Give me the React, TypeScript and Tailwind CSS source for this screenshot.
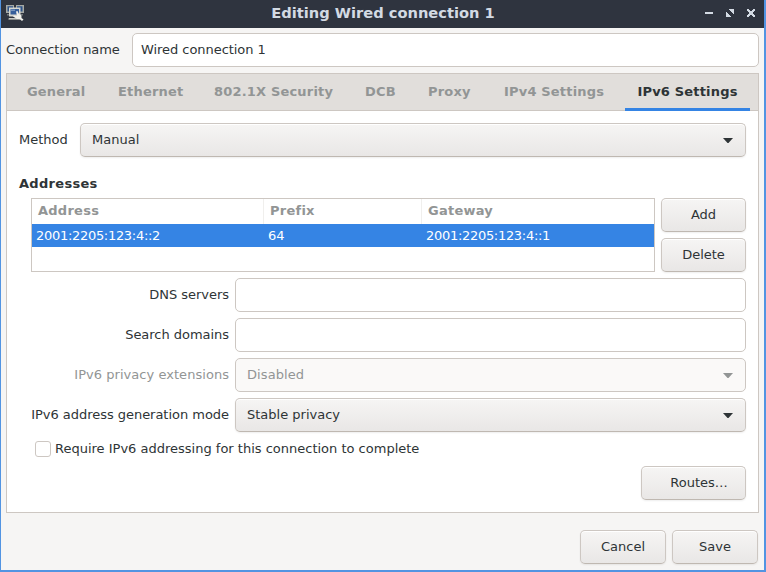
import type { ReactNode } from 'react';

const buttonLook =
  'rounded-[5px] border border-[#cdc7c2] border-b-[#bfb8b1] bg-linear-to-b from-[#f6f5f4] to-[#e9e7e6] shadow-[inset_0_1px_#fff,0_1px_2px_rgba(0,0,0,0.07)]';

function Button({ children, className }: { children: ReactNode; className: string }) {
  return (
    <button className={`flex h-[34px] shrink-0 items-center justify-center pb-px ${buttonLook} ${className}`}>
      {children}
    </button>
  );
}

function Entry({ value }: { value?: string }) {
  return (
    <div className="flex h-[34px] min-w-0 flex-1 items-center rounded-[5px] border border-[#cdc7c2] bg-white px-2 pb-px tracking-[-0.05px]">
      {value}
    </div>
  );
}

function Select({ value, disabled }: { value: string; disabled?: boolean }) {
  return (
    <div
      className={`flex h-[34px] min-w-0 flex-1 items-center justify-between pr-3 pb-px pl-[11px] ${
        disabled ? 'rounded-[5px] border border-[#cdc7c2] bg-[#faf9f8] tracking-[0.08px] text-[#929595]' : buttonLook
      }`}
    >
      <span>{value}</span>
      <svg width="10" height="5" className="mt-px" fill="currentColor">
        <path d="M0 0H10L5.5 5H4.5Z" />
      </svg>
    </div>
  );
}

function Row({ label, disabled, children }: { label: string; disabled?: boolean; children: ReactNode }) {
  return (
    <div className="flex h-[34px] items-center">
      <span
        className={`w-[210px] shrink-0 pr-1.5 pb-px text-right ${
          disabled ? 'tracking-[0.04px] text-[#929595]' : 'tracking-[-0.03px]'
        }`}
      >
        {label}
      </span>
      {children}
    </div>
  );
}

const tabs = [
  { name: 'General', width: 'w-[91px]' },
  { name: 'Ethernet', width: 'w-[96px]' },
  { name: '802.1X Security', width: 'w-[151px]' },
  { name: 'DCB', width: 'w-[63px]' },
  { name: 'Proxy', width: 'w-[76px]' },
  { name: 'IPv4 Settings', width: 'w-[133px]' },
];

function NetworkIcon() {
  return (
    <svg width="18" height="18" viewBox="0 0 18 18">
      <path fill="#a5a8a4" d="M0 1H8V9H0ZM10 1H18V9H10Z" />
      <path fill="#2d5288" d="M1.5 2.2H7V7.5H1.5ZM11 2.2H16.5V7.5H11Z" />
      <path fill="#73777a" d="M1 10H4V11.5H1ZM14 10H17V11.5H14Z" />
      <path fill="#d5d6d0" d="M3 3.5H14.5V12.5H3Z" />
      <path fill="#365f9b" d="M4.5 5H13V10.5H4.5Z" />
      <path fill="#7895bd" d="M5 5.5H9V7H5Z" />
      <path fill="#8c8f8d" d="M2.5 14H14V16H2.5Z" />
      <path fill="#c6c8c4" d="M3 14H13V15H3Z" />
      <path fill="#f0f0eb" d="M10 7.5L11.5 7L13 10L15.5 11.5V14L17.5 15.5L16 17L13.5 15H11L7 12.5L8 11.5L11 12Z" />
    </svg>
  );
}

export default function App() {
  return (
    <div className="flex h-[572px] w-[766px] flex-col overflow-hidden border-r-2 border-b-2 border-l border-[#5294e2] bg-[#f6f5f4] font-['DejaVu_Sans',sans-serif] text-[13px] leading-4 whitespace-nowrap text-[#2e3436]">
      <header className="flex h-7 shrink-0 items-center bg-[#2f343f] pr-[7px] pl-[5px] text-[#d3dae3]">
        <div className="w-[55px] pb-0.5"><NetworkIcon /></div>
        <h1 className="flex-1 pb-0.5 text-center text-[14.67px] font-bold">Editing Wired connection 1</h1>
        <svg width="52" height="8" className="mb-0.5" fill="currentColor" shapeRendering="crispEdges">
          <path d="M0 3H8V5H0Z" />
          <path d="M24 0H29V5H28V4H27V3H26V2H25V1H24ZM21 3H22V4H23V5H24V6H25V7H26V8H21Z" />
          <path d="M42 0H44V1H45V2H47V1H48V0H50V2H49V3H48V5H49V6H50V8H48V7H47V6H45V7H44V8H42V6H43V5H44V3H43V2H42Z" />
        </svg>
      </header>

      <main className="flex flex-1 flex-col px-[5px] pt-[5px]">
        <div className="flex h-[34px] items-center">
          <span className="w-[126px] shrink-0 pb-px tracking-[-0.05px]">Connection name</span>
          <Entry value="Wired connection 1" />
        </div>

        <section className="mt-1.5 h-[440px] w-[753px] border border-[#cdc7c2] bg-white">
          <nav className="flex h-[37px] border-b border-[#cdc7c2] bg-[#e1dedb] pl-2 font-bold tracking-[0.18px] text-[#929595]">
            {tabs.map((tab) => (
              <div key={tab.name} className={`flex shrink-0 items-center pl-3 ${tab.width}`}>{tab.name}</div>
            ))}
            <div className="flex h-[37px] w-[125px] items-center justify-center border-b-3 border-[#3584e4] pt-[2px] text-[#2e3436]">
              IPv6 Settings
            </div>
          </nav>

          <div className="flex flex-col px-3 pt-3">
            <div className="flex items-center">
              <span className="w-[61px] pb-px">Method</span>
              <Select value="Manual" />
            </div>
            <h2 className="mt-[19px] font-bold tracking-[0.3px]">Addresses</h2>

            <div className="mt-1.5 ml-3 flex gap-1.5">
              <div className="h-[74px] w-[624px] border border-[#cdc7c2]">
                <div className="flex h-[25px] font-bold tracking-[0.25px] text-[#929595]">
                  <div className="w-[232px] border-r border-[#f0efed] pt-1 pl-1.5">Address</div>
                  <div className="w-[158px] border-r border-[#f0efed] pt-1 pl-1.5">Prefix</div>
                  <div className="pt-1 pl-1.5">Gateway</div>
                </div>
                <div className="flex h-[23px] items-center bg-[#3584e4] pl-1 tracking-[-0.3px] text-white">
                  <span className="w-[232px]">2001:2205:123:4::2</span>
                  <span className="w-[158px] tracking-[-0.1px]">64</span>
                  <span>2001:2205:123:4::1</span>
                </div>
              </div>
              <div className="flex flex-col gap-1.5">
                <Button className="w-[85px]">Add</Button>
                <Button className="w-[85px]">Delete</Button>
              </div>
            </div>

            <div className="mt-1.5 ml-1.5 flex flex-col gap-1.5">
              <Row label="DNS servers"><Entry /></Row>
              <Row label="Search domains"><Entry /></Row>
              <Row label="IPv6 privacy extensions" disabled><Select value="Disabled" disabled /></Row>
              <Row label="IPv6 address generation mode"><Select value="Stable privacy" /></Row>
            </div>

            <div className="mt-[9px] ml-4 flex h-4 items-center">
              <span className="mr-1 h-4 w-4 rounded-[3px] border border-[#cdc7c2] bg-white" />
              Require IPv6 addressing for this connection to complete
            </div>
            <Button className="mt-[9px] w-[105px] self-end pl-[11px]">Routes…</Button>
          </div>
        </section>

        <footer className="mt-[17px] flex justify-end gap-1.5 pr-px">
          <Button className="w-[86px]">Cancel</Button>
          <Button className="w-[86px]">Save</Button>
        </footer>
      </main>
    </div>
  );
}
